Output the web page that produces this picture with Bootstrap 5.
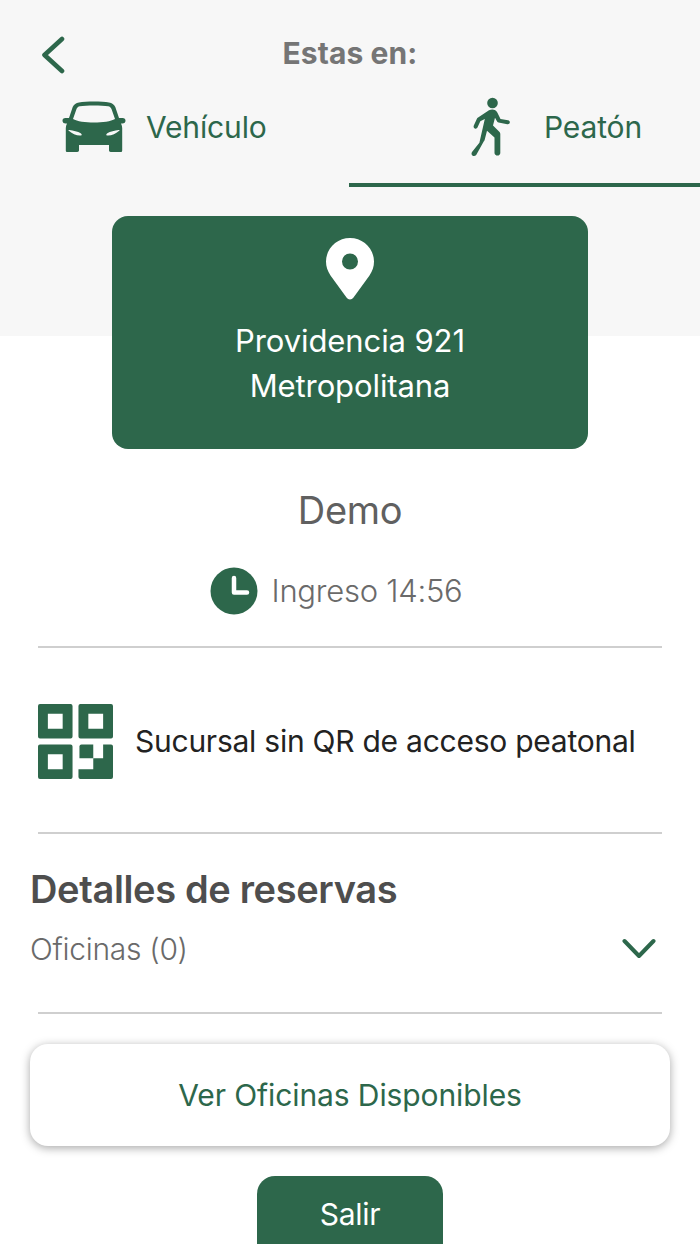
<!DOCTYPE html>
<html lang="es">
<head>
<meta charset="utf-8">
<title>Estas en</title>
<link rel="stylesheet" href="https://cdn.jsdelivr.net/npm/bootstrap@5.3.0/dist/css/bootstrap.min.css">
<style>
html,body{height:1244px;overflow:hidden;background:#fff}
body{font-family:Inter,"Liberation Sans",sans-serif;color:#666}
.screen{height:1244px;overflow:hidden;background:linear-gradient(#f7f7f7 336px,#fff 336px)}
.topbar{height:76px;padding:36px 0 0 41px;position:relative}
.topbar svg{display:block}
.ttl{position:absolute;left:0;right:0;top:36px;text-align:center;font-size:30px;line-height:34px;font-weight:700;color:#757575;letter-spacing:.1px}
.tabs{height:110px}
.tabitem{width:350px;height:110px;color:#2d674b;font-size:30px;line-height:36px;letter-spacing:-.15px;padding-top:21px}
.tabitem.on{border-bottom:4px solid #2d674b;height:111px;width:351px;margin-left:-1px}
.tabcar{padding-left:62px;gap:20px}
.tabwalk{padding-left:122px;gap:31px}
.tablabel{margin-top:12px}
.placecard{width:476px;height:233px;margin:30px auto 0;background:#2d674b;border-radius:16px;color:#fff;font-size:31px;line-height:45px;text-align:center;padding-top:22px;letter-spacing:-.1px}
.placecard svg{display:block;margin:0 auto 18px}
.who{font-size:38px;line-height:44px;text-align:center;color:#606060;margin-top:39px;letter-spacing:-.3px}
.entry{margin-top:35px;gap:14px;font-size:31px;line-height:48px;font-weight:300;color:#6a6a6a;letter-spacing:-.25px;padding-right:28px}
.rule{height:2px;background:#cfcfcf;margin:0 38px}
.entryrule{margin-top:31px}
.qr{padding:2px 0 0 38px;gap:22px;height:184px;font-size:30px;color:#222;letter-spacing:-.25px}
.rsv{padding:33px 30px 0;height:178px}
.rsv h2{font-size:38px;line-height:44px;font-weight:600;color:#4e4e4e;margin:0;letter-spacing:-.35px}
.rsvrow{margin-top:20px;font-size:30px;line-height:36px;font-weight:300;color:#6a6a6a;padding-right:14px;letter-spacing:-.3px}
.avail{display:block;width:640px;height:102px;margin:30px auto 0;line-height:102px;background:#fff;border:0;border-radius:18px;box-shadow:0 2px 10px rgba(0,0,0,.35);color:#2d674b;font-size:30px;padding:0;text-align:center;letter-spacing:-.1px}
.leave{display:block;width:186px;height:90px;margin:30px auto 0;background:#2d674b;border:0;border-radius:18px;color:#fff;font-size:30px;line-height:76px;padding:0 0 14px;letter-spacing:-.3px}
</style>
</head>
<body>
<div class="screen">
  <div class="topbar">
    <svg width="24" height="38" viewBox="0 0 24 38"><path d="M21 3 3.500 19 21 35" fill="none" stroke="#2d674b" stroke-width="4.600" stroke-linecap="round" stroke-linejoin="round"/></svg>
    <div class="ttl">Estas en:</div>
  </div>
  <div class="tabs d-flex">
    <div class="tabitem tabcar d-flex align-items-start">
      <svg width="64" height="52" viewBox="0 0 64 52" class="flex-shrink-0 mt-1"><path fill="#2d674b" fill-rule="evenodd" d="M17 1.500C24 .3 40 .3 47 1.500c3 .5 5 2 6.300 4.500L57 17h3.500c2 0 3.200 1.300 3 3-.2 1.700-1.500 2.500-3 2.500H59c.7 1.500 1.200 3 1.200 4.500v22.500c0 1-.7 1.500-1.500 1.500h-10c-1 0-1.700-.7-1.700-1.700V44H17v5.300c0 1-.7 1.700-1.700 1.700h-10c-.8 0-1.500-.5-1.500-1.500V27c0-1.500.5-3 1.200-4.500H3.500c-1.500 0-2.800-.8-3-2.500-.2-1.700 1-3 3-3H7L10.700 6C12 3.500 14 2 17 1.500ZM17.800 5.200c-1.600.3-2.700 1.200-3.300 2.800L11 18c8 4.800 34 4.800 42 0L49.500 8c-.6-1.600-1.700-2.500-3.300-2.800-6.500-1-22-1-28.400 0ZM6.500 29.500c3.500 3.500 9 5.500 12.500 5 1-.2 1-1.500-.3-2.300-2.800-1.700-7.500-3-11.200-3.300-.9-.1-1.500.1-1 .6ZM57.500 29.500c-3.500 3.500-9 5.500-12.500 5-1-.2-1-1.500.3-2.300 2.800-1.700 7.500-3 11.200-3.300.9-.1 1.500.1 1 .6Z"/></svg>
      <span class="tablabel">Vehículo</span>
    </div>
    <div class="tabitem on tabwalk d-flex align-items-start">
      <svg width="42" height="61" viewBox="0 0 42 61" class="flex-shrink-0"><g fill="#2d674b"><circle cx="21.500" cy="6" r="5.300"/><path d="M18 13.300c3.500-1.500 7-.5 8.300 2.300l3.200 6.300 7.500 1.400c1.300.3 2 1.300 1.800 2.300-.2 1.200-1.300 1.900-2.500 1.600l-8.800-1.700c-.8-.2-1.400-.6-1.700-1.400l-1.800-3.300-2 7.800 6.300 6.200c.7.700 1 1.400 1 2.300V56c0 1.500-1.200 2.600-2.800 2.600S23.500 57.500 23.500 56V40.500l-7.500-6.700-2.300 9c-.2.700-.5 1.300-1 1.800L5.200 58c-1 1.200-2.700 1.400-3.800.5-1.100-.9-1.200-2.500-.2-3.700l7.200-9L13.800 22l-4.500 2.300-2.700 6c-.5 1.200-1.700 1.700-2.800 1.200-1.100-.5-1.500-1.700-1-2.900l3-6.700c.3-.7.700-1.100 1.300-1.400Z"/></g></svg>
      <span class="tablabel">Peatón</span>
    </div>
  </div>
  <div class="placecard">
    <svg width="48" height="62" viewBox="0 0 48 62"><path fill="#fff" fill-rule="evenodd" d="M24 0c13 0 24 10.500 24 23.500 0 5-1.500 9.500-4.500 14L27.500 59.500c-1.800 2.600-5.200 2.600-7 0L4.500 37.500C1.500 33 0 28.500 0 23.500 0 10.500 11 0 24 0Zm0 15.500a8 8 0 1 0 0 16 8 8 0 0 0 0-16Z"/></svg>
    <div>Providencia 921</div>
    <div>Metropolitana</div>
  </div>
  <div class="who">Demo</div>
  <div class="entry d-flex justify-content-center align-items-center">
    <svg width="48" height="48" viewBox="0 0 48 48" class="flex-shrink-0"><circle cx="24" cy="24" r="23.500" fill="#2d674b"/><path d="M24 11v14.500h13" fill="none" stroke="#fff" stroke-width="4.500" stroke-linecap="round" stroke-linejoin="round"/></svg>
    <span>Ingreso 14:56</span>
  </div>
  <div class="rule entryrule"></div>
  <div class="qr d-flex align-items-center">
    <svg width="75" height="75" viewBox="0 0 76 76" class="flex-shrink-0"><g fill="#2d674b" fill-rule="evenodd"><path d="M2 0h31a2 2 0 0 1 2 2v31a2 2 0 0 1-2 2H2a2 2 0 0 1-2-2V2a2 2 0 0 1 2-2Zm8 10v15h15V10Z"/><path d="M43 0h31a2 2 0 0 1 2 2v31a2 2 0 0 1-2 2H43a2 2 0 0 1-2-2V2a2 2 0 0 1 2-2Zm8 10v15h15V10Z"/><path d="M2 41h31a2 2 0 0 1 2 2v31a2 2 0 0 1-2 2H2a2 2 0 0 1-2-2V43a2 2 0 0 1 2-2Zm8 10v15h15V51Z"/><path d="M44 41h12v14H42V43a2 2 0 0 1 2-2Z"/><path d="M66 41h8a2 2 0 0 1 2 2v31a2 2 0 0 1-2 2H43a2 2 0 0 1-2-2V66h15V55h10Z"/></g></svg>
    <span>Sucursal sin QR de acceso peatonal</span>
  </div>
  <div class="rule"></div>
  <div class="rsv">
    <h2>Detalles de reservas</h2>
    <div class="rsvrow d-flex justify-content-between align-items-center">
      <span>Oficinas (0)</span>
      <svg width="34" height="22" viewBox="0 0 34 22" class="flex-shrink-0"><path d="M2.500 3 17 18 31.500 3" fill="none" stroke="#2d674b" stroke-width="4" stroke-linecap="round" stroke-linejoin="round"/></svg>
    </div>
  </div>
  <div class="rule"></div>
  <button type="button" class="btn avail">Ver Oficinas Disponibles</button>
  <button type="button" class="btn leave">Salir</button>
</div>
<script src="https://cdn.jsdelivr.net/npm/bootstrap@5.3.0/dist/js/bootstrap.bundle.min.js"></script>
</body>
</html>
